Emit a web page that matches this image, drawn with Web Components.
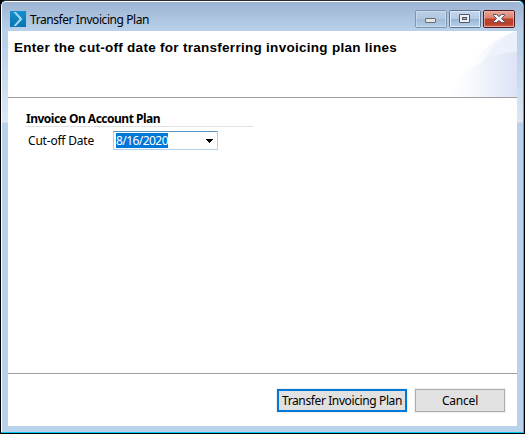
<!DOCTYPE html>
<html lang="en"><head><meta charset="utf-8"><title>Transfer Invoicing Plan</title>
<style>html,body{margin:0;height:100%;overflow:hidden;background:#000}body{font:12px/16px "Noto Sans","Open Sans",sans-serif;color:#000}</style>
</head><body>
<dialog-window>
 <title-bar slot="title"><fit-text width="119">Transfer Invoicing Plan</fit-text></title-bar>
 <dialog-header slot="header"><fit-text width="383">Enter the cut-off date for transferring invoicing plan lines</fit-text></dialog-header>
 <form-group>
  <fit-text slot="heading" width="134">Invoice On Account Plan</fit-text>
  <fit-text slot="label" width="66">Cut-off Date</fit-text>
  <date-combo><fit-text width="52">8/16/2020</fit-text></date-combo>
 </form-group>
 <push-button slot="actions" primary><fit-text width="120">Transfer Invoicing Plan</fit-text></push-button>
 <push-button slot="actions"><fit-text width="36">Cancel</fit-text></push-button>
</dialog-window>
<script>
const define=(name,html,setup)=>customElements.define(name,class extends HTMLElement{
  constructor(){super();this.attachShadow({mode:'open'}).innerHTML=html}
  connectedCallback(){if(setup)setup(this)}
});
define('dialog-window',`<style>
:host{display:block;box-sizing:border-box;width:525px;height:434px;border:1px solid #000;border-top-color:#282a30;border-radius:6px 6px 0 0;overflow:hidden;background:#00c8ee}
.frame{box-sizing:border-box;width:522px;height:431px;margin:0 1px 1px 0;border:solid #fff;border-width:1px 0 0 1px;border-radius:5px 5px 0 0;padding:0 6px 6px 6px;background:linear-gradient(#9cb4d2 0,#b9d1ea 29px,#b9d1ea 42px,#dde7f3 120px,#b9d1ea 121px);display:flex;flex-direction:column}
.client{flex:1;min-height:0;background:#fff;display:flex;flex-direction:column}
.body{flex:1;padding:12px 17px 0 18px}
.actions{height:53px;box-sizing:border-box;border-top:1px solid #a0a0a0;display:flex;justify-content:flex-end;align-items:flex-start;gap:8px;padding:15px 12px 0 0}
</style><div class="frame"><slot name="title"></slot><div class="client"><slot name="header"></slot><div class="body"><slot></slot></div><div class="actions"><slot name="actions"></slot></div></div></div>`);
define('title-bar',`<style>
:host{display:flex;height:29px;flex:none;align-items:flex-start}
.logo{margin:9px 4px 0 2px}.title{flex:1;padding-top:10px}.controls{margin:8px 0 0 0}svg{display:block}
</style><svg class="logo" width="16" height="16" viewBox="0 0 16 16"><defs><linearGradient id="l" x2="0" y2="1"><stop stop-color="#148fcd"/><stop offset="1" stop-color="#0875b0"/></linearGradient></defs><path fill="url(#l)" d="M0 0h16v16H0z"/><path d="M3.5 1H6l6.5 7L6 15H3.5l6-7z" fill="#a3d8ef"/></svg>
<div class="title"><slot></slot></div>
<svg class="controls" width="102" height="20" viewBox="0 0 102 20">
<defs><linearGradient id="b" x2="0" y2="1"><stop stop-color="#bdd0e6"/><stop offset=".49" stop-color="#b0c7e0"/><stop offset=".5" stop-color="#9fb9d6"/><stop offset="1" stop-color="#b6d0e9"/></linearGradient><linearGradient id="m" x2="0" y2="1"><stop stop-color="#c4d7ee"/><stop offset=".49" stop-color="#b4cbe5"/><stop offset=".5" stop-color="#98b4d2"/><stop offset="1" stop-color="#b9d4ed"/></linearGradient><linearGradient id="r" x2="0" y2="1"><stop stop-color="#e9a99b"/><stop offset=".46" stop-color="#d9816f"/><stop offset=".48" stop-color="#bd422c"/><stop offset=".8" stop-color="#bc3e28"/><stop offset="1" stop-color="#d9715d"/></linearGradient></defs>
<g><rect x=".5" y=".5" width="31" height="17" rx="1.5" fill="url(#b)" stroke="#8095b1"/><rect x="1.5" y="1.5" width="29" height="15" fill="none" stroke="#d0dfef" stroke-opacity=".65"/><rect x="10.5" y="8.5" width="10" height="4" rx=".5" fill="#e7e5df" stroke="#666b73"/></g>
<g><rect x="34.5" y=".5" width="31" height="17" rx="1.5" fill="url(#m)" stroke="#62758e"/><rect x="35.5" y="1.5" width="29" height="15" fill="none" stroke="#dae8f7"/><rect x="44.5" y="4.5" width="10" height="8" rx=".5" fill="#f1f0f1" stroke="#4e576c"/><rect x="47.5" y="7.5" width="4" height="2" fill="#9eb8d2" stroke="#4e576c"/></g>
<g><rect x="68.5" y=".5" width="31" height="17" rx="1.5" fill="url(#r)" stroke="#501b27"/><rect x="69.5" y="1.5" width="29" height="15" fill="none" stroke="#efb5a6" stroke-opacity=".75"/><path d="M78.5 4.5h3l2.5 2 2.5-2h3v1l-3 3 3 3v1h-3l-2.5-2-2.5 2h-3v-1l3-3-3-3z" fill="#f4f4f4" stroke="#595265"/></g></svg>`);
define('dialog-header',`<style>
:host{display:flex;justify-content:space-between;box-sizing:border-box;height:67px;flex:none;border-bottom:1px solid #a0a0a0;font:bold 13.5px/18px "Liberation Sans",sans-serif}
.title{padding:8px 0 0 6px}svg{display:block}
</style><div class="title"><slot></slot></div><svg width="70" height="66" viewBox="0 0 70 66"><defs><linearGradient id="o"><stop stop-color="#fff"/><stop offset=".4" stop-color="#fcfdff"/><stop offset="1" stop-color="#ebeffa"/></linearGradient><linearGradient id="i"><stop stop-color="#f6f8fd" stop-opacity="0"/><stop offset="1" stop-color="#dde3f5"/></linearGradient></defs><path d="M0 66C15 38 40 8 70 0v66z" fill="url(#o)"/><path d="M70 0C51 8 41 20 35 33Q50 24 70 21z" fill="#e8edf9" opacity=".5"/><path d="M0 66C13 42 40 22 70 21v45z" fill="url(#i)"/></svg>`);
define('form-group',`<style>
:host{display:block;width:227px}.heading{font-weight:bold;height:17px;line-height:18px;border-bottom:1px solid #e2e2e2;box-sizing:border-box;margin-left:-1px;padding-left:1px;width:228px}
.row{display:flex;padding:4px 0 0 2px}.label{width:85px;padding-top:2px}
</style><div class="heading"><slot name="heading"></slot></div><div class="row"><div class="label"><slot name="label"></slot></div><slot></slot></div>`);
define('date-combo',`<style>
:host{display:flex;justify-content:space-between;align-items:center;box-sizing:border-box;width:105px;height:19px;border:1px solid #b5cfe7;border-top-color:#5794bf;background:#fff;padding:0 4px 0 2px}
.value{height:15px;line-height:15px;background:#0078d7;color:#fff}svg{display:block}
</style><div class="value"><slot></slot></div><svg width="7" height="4"><path d="M0 0h7v1H6v1H5v1H4v1H3V3H2V2H1V1H0z"/></svg>`);
define('push-button',`<style>
:host{display:flex;align-items:center;justify-content:center;box-sizing:border-box;width:90px;height:23px;border:1px solid #adadad;background:#e1e1e1;box-shadow:0 0 0 1px #f0f0f0}
:host([primary]){width:130px;border:2px solid #0078d7}
</style><slot></slot>`);
// Spreads its line of text over the given width.
define('fit-text',`<style>:host{display:block;white-space:nowrap}span{display:inline-block}</style><span><slot></slot></span>`,el=>{
  const s=el.shadowRoot.querySelector('span'),w=+el.getAttribute('width');
  el.style.width=w+'px';
  s.style.letterSpacing=(w-s.getBoundingClientRect().width)/el.textContent.length+'px';
});
</script></body></html>
